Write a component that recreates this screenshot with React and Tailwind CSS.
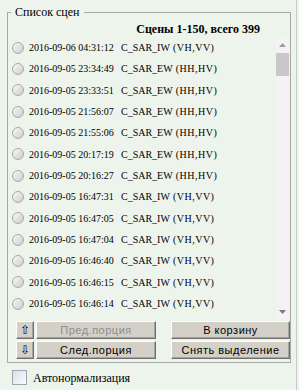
import React from 'react';

const ROWS = [
  ['2016-09-06 04:31:12', 'C_SAR_IW', '(VH,VV)'],
  ['2016-09-05 23:34:49', 'C_SAR_EW', '(HH,HV)'],
  ['2016-09-05 23:33:51', 'C_SAR_EW', '(HH,HV)'],
  ['2016-09-05 21:56:07', 'C_SAR_EW', '(HH,HV)'],
  ['2016-09-05 21:55:06', 'C_SAR_EW', '(HH,HV)'],
  ['2016-09-05 20:17:19', 'C_SAR_EW', '(HH,HV)'],
  ['2016-09-05 20:16:27', 'C_SAR_EW', '(HH,HV)'],
  ['2016-09-05 16:47:31', 'C_SAR_IW', '(VH,VV)'],
  ['2016-09-05 16:47:05', 'C_SAR_IW', '(VH,VV)'],
  ['2016-09-05 16:47:04', 'C_SAR_IW', '(VH,VV)'],
  ['2016-09-05 16:46:40', 'C_SAR_IW', '(VH,VV)'],
  ['2016-09-05 16:46:15', 'C_SAR_IW', '(VH,VV)'],
  ['2016-09-05 16:46:14', 'C_SAR_IW', '(VH,VV)'],
  ['2016-09-05 16:46:01', 'C_SAR_EW', '(HH,HV)'],
];

function Row({ date, prod, pol }) {
  return (
    <div className="flex h-[21.33px] shrink-0 items-center pl-[4px] text-[10px] text-black">
      <span className="h-[12px] w-[12px] shrink-0 rounded-full border border-[#a8a8a8] bg-linear-to-br from-[#f8f8f8] to-[#cdcdcd]" />
      <span className="ml-[5px] w-[92px] shrink-0 whitespace-nowrap">{date}</span>
      <span className="shrink-0 whitespace-nowrap">{prod}</span>
      <span className="ml-[3px] whitespace-nowrap tracking-[0.5px]">{pol}</span>
    </div>
  );
}

function ScrollBar() {
  return (
    <div className="mr-[1px] flex w-[13px] shrink-0 flex-col bg-[#f2f3f2]">
      <div className="flex h-[16px] items-center justify-center">
        <svg width="7" height="4" viewBox="0 0 7 4"><path d="M3.5 0L7 4H0z" fill="#9c9c9c" /></svg>
      </div>
      <div className="h-[23px] bg-[#c8c8c8]" />
      <div className="flex-1" />
      <div className="flex h-[15px] items-center justify-center">
        <svg width="7" height="4" viewBox="0 0 7 4"><path d="M0 0H7L3.5 4z" fill="#7c7c7c" /></svg>
      </div>
    </div>
  );
}

const btn = "flex h-[18px] shrink-0 items-center justify-center border border-t-white border-l-white border-r-[#6e6e6e] border-b-[#6e6e6e] bg-[#d4d0c8] shadow-[inset_-1px_-1px_#a4a4a4] font-['Liberation_Sans',sans-serif] text-[11px] leading-none tracking-[0.5px]";

export default function App() {
  return (
    <div className="h-[390px] w-[299px] bg-[#edf4ec] font-['Liberation_Serif',serif]">
      <div className="h-full w-[297px] overflow-hidden border-r border-[#c5cbc5] pl-[7px] pt-[5px]">
        <fieldset className="w-[284px] border border-[#a7aba7] pb-[3px]">
          <legend className="ml-[3px] px-[4px] text-[12px] leading-[14px] text-black">Список сцен</legend>

          <div className="mt-[3px] h-[14px] pr-[30px] text-right text-[12px] font-bold leading-[14px] text-black">
            Сцены 1-150, всего 399
          </div>

          <div className="mt-[1px] flex h-[282px]">
            <div className="flex flex-1 flex-col overflow-hidden">
              {ROWS.map(([d, p, s]) => <Row key={d} date={d} prod={p} pol={s} />)}
            </div>
            <ScrollBar />
          </div>

          <div className="mt-[2px] flex flex-col gap-[2px] pl-[8px]">
            <div className="flex">
              <div className={btn + " w-[18px] text-[12px]"}>⇧</div>
              <div className={btn + " ml-[2px] w-[120px] text-[#8d8d8d]"}>Пред.порция</div>
              <div className={btn + " ml-[15px] w-[119px] text-black"}>В корзину</div>
            </div>
            <div className="flex">
              <div className={btn + " w-[18px] text-[12px]"}>⇩</div>
              <div className={btn + " ml-[2px] w-[120px] text-black"}>След.порция</div>
              <div className={btn + " ml-[15px] w-[119px] text-black"}>Снять выделение</div>
            </div>
          </div>
        </fieldset>

        <div className="mt-[7px] flex h-[15px] items-center pl-[5px]">
          <span className="h-[15px] w-[15px] shrink-0 border border-[#9ba6b1] bg-linear-to-br from-[#d6e0eb] to-[#fbfcfe]" />
          <span className="ml-[6px] text-[12px] text-black">Автонормализация</span>
        </div>
      </div>
    </div>
  );
}
